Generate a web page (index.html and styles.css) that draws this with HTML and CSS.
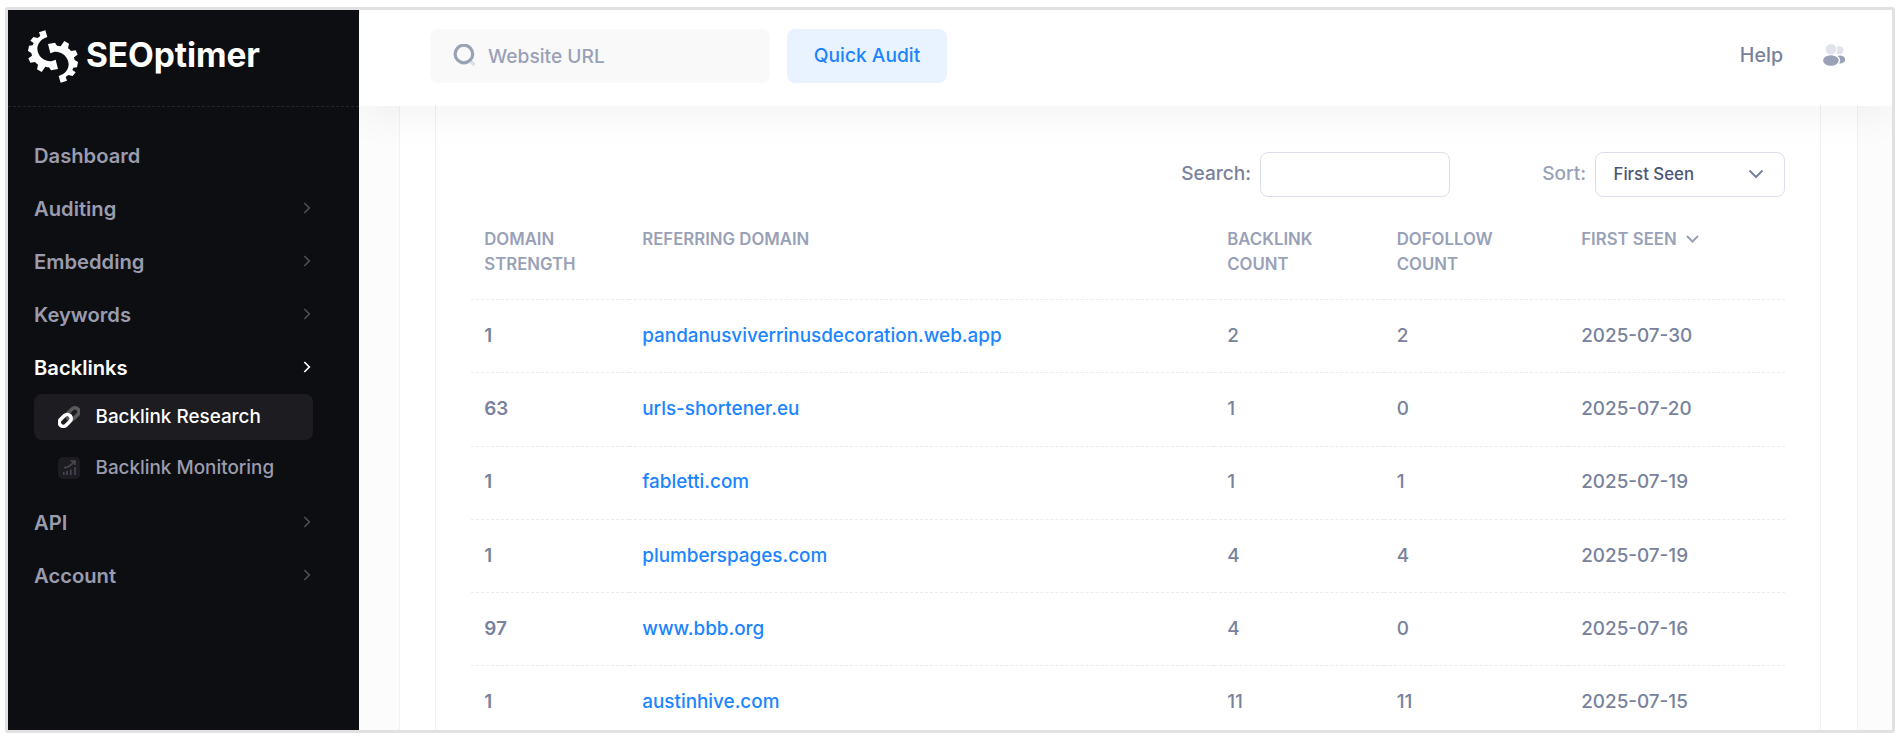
FILE: index.html
```
<!DOCTYPE html>
<html lang="en">
<head>
<meta charset="utf-8">
<title>SEOptimer - Backlink Research</title>
<link rel="stylesheet" href="styles.css">
</head>
<body>
<div class="frame">
  <aside class="sidebar">
    <div class="brand">
      <svg class="brand-mark" viewBox="24 30 150 159">
        <defs>
          <path id="gear" d="M57 37 L76 31 L82 51 C62 57 52 72 52 87 C53 108 72 125 94 124 L107 119 L114 147 L93 151 L87 142 Q82 142 76 140 L65 156 L51 148 L54 134 Q48 130 45 126 L31 128 L25 115 L36 107 L34 99 L24 93 L27 77 L38 76 L41 69 L31 62 L40 51 L53 54 L61 48 Z"/>
        </defs>
        <use href="#gear"/>
        <use href="#gear" transform="rotate(180 99 109.5)"/>
      </svg>
      <span class="brand-name">SEOptimer</span>
    </div>
    <nav class="menu">
      <a class="menu-item">Dashboard</a>
      <a class="menu-item">Auditing<svg class="chev" viewBox="0 0 8 12"><path d="M1.3 1 6.3 6l-5 5"/></svg></a>
      <a class="menu-item">Embedding<svg class="chev" viewBox="0 0 8 12"><path d="M1.3 1 6.3 6l-5 5"/></svg></a>
      <a class="menu-item">Keywords<svg class="chev" viewBox="0 0 8 12"><path d="M1.3 1 6.3 6l-5 5"/></svg></a>
      <a class="menu-item active">Backlinks<svg class="chev" viewBox="0 0 8 12"><path d="M1.3 1 6.3 6l-5 5"/></svg></a>
      <div class="submenu">
        <a class="sub-item active">
          <svg class="sub-icon" viewBox="0 0 22 22" fill="none" stroke-width="3.6">
            <rect x="8.2" y="3.700" width="13.500" height="8" rx="4" transform="rotate(-45 15 7.700)" stroke="#5b5b5e"/>
            <rect x="0.500" y="10.400" width="13.500" height="8" rx="4" transform="rotate(-45 7.250 14.400)" stroke="#fff"/>
          </svg>Backlink Research</a>
        <a class="sub-item">
          <svg class="sub-icon" viewBox="0 0 22 22" fill="none" stroke="#4a4a55" stroke-width="1.5">
            <rect width="22" height="22" rx="5" fill="#1c1c21" stroke="none"/>
            <path d="M5.8 18v-3M9 18v-4M12.800 18v-5.500M17 18V10M6 10.800C10.500 10.500 13.500 8 16.500 4.200M12.500 4h4.500v4"/>
          </svg>Backlink Monitoring</a>
      </div>
      <a class="menu-item">API<svg class="chev" viewBox="0 0 8 12"><path d="M1.3 1 6.3 6l-5 5"/></svg></a>
      <a class="menu-item">Account<svg class="chev" viewBox="0 0 8 12"><path d="M1.3 1 6.3 6l-5 5"/></svg></a>
    </nav>
  </aside>
  <div class="main">
    <header class="topbar">
      <div class="url-box">
        <svg class="search-icon" viewBox="0 0 24 24"><path d="M16.500 16.500l5 4.500" stroke="#dcdfe8" stroke-width="3.200"/><circle cx="10.900" cy="10" r="8.800" stroke="#99a1b7" stroke-width="3.200"/></svg>
        <span>Website URL</span>
      </div>
      <button class="audit-btn">Quick Audit</button>
      <a class="help">Help</a>
      <svg class="users-icon" viewBox="0 0 22 22">
        <circle cx="16.300" cy="6.200" r="4" fill="#e0e3ea"/>
        <ellipse cx="17" cy="15.500" rx="5.200" ry="4" fill="#99a1b7"/>
        <ellipse cx="8.300" cy="16.500" rx="8.900" ry="6.200" fill="#fff"/>
        <circle cx="8" cy="5.300" r="6.200" fill="#fff"/>
        <circle cx="8" cy="5.300" r="5.300" fill="#e0e3ea"/>
        <ellipse cx="7.900" cy="16.500" rx="7.800" ry="5.200" fill="#99a1b7"/>
      </svg>
    </header>
    <div class="content">
      <div class="card"><div class="panel">
        <div class="filters">
          <label class="search-label">Search:</label>
          <input class="search-input" type="text">
          <label class="sort-label">Sort:</label>
          <div class="select">First Seen<svg class="caret" viewBox="0 0 16 10"><path d="M1.500 1.500 8 8l6.500-6.500"/></svg></div>
        </div>
        <div class="table">
          <div class="row head">
            <div>DOMAIN STRENGTH</div><div>REFERRING DOMAIN</div><div>BACKLINK COUNT</div><div>DOFOLLOW COUNT</div><div>FIRST SEEN<svg class="sort-caret" viewBox="0 0 13 8"><path d="M1 1l5.500 5.500L12 1"/></svg></div>
          </div>
          <div class="row"><div class="ds">1</div><div class="link">pandanusviverrinusdecoration.web.app</div><div>2</div><div>2</div><div>2025-07-30</div></div>
          <div class="row"><div class="ds">63</div><div class="link">urls-shortener.eu</div><div>1</div><div>0</div><div>2025-07-20</div></div>
          <div class="row"><div class="ds">1</div><div class="link">fabletti.com</div><div>1</div><div>1</div><div>2025-07-19</div></div>
          <div class="row"><div class="ds">1</div><div class="link">plumberspages.com</div><div>4</div><div>4</div><div>2025-07-19</div></div>
          <div class="row"><div class="ds">97</div><div class="link">www.bbb.org</div><div>4</div><div>0</div><div>2025-07-16</div></div>
          <div class="row"><div class="ds">1</div><div class="link">austinhive.com</div><div>11</div><div>11</div><div>2025-07-15</div></div>
        </div>
      </div></div>
    </div>
  </div>
</div>
</body>
</html>
```
FILE: styles.css
```
* { box-sizing: border-box; }
html, body { height: 100%; }
body {
  margin: 0;
  padding: 7px 5px;
  background: #fff;
  font-family: Inter, "Liberation Sans", sans-serif;
  font-weight: 500;
  font-size: 18.870px;
  color: #78829d;
  overflow: hidden;
}
.frame {
  display: flex;
  height: 726px;
  border: 3px solid #e1e1e1;
  border-radius: 3px;
  overflow: hidden;
}

/* Sidebar */
.sidebar {
  flex: none;
  width: 351px;
  background: #0d0e12;
  color: #9a9cae;
}
.brand {
  display: flex;
  align-items: center;
  height: 97px;
  padding: 0 0 4px 20px;
  border-bottom: 1px dashed #25262b;
}
.brand-mark { width: 50px; height: 53px; fill: #fff; }
.brand-name {
  margin: -2px 0 0 8px;
  color: #fff;
  font-size: 33.5px;
  font-weight: 700;
  letter-spacing: -.1px;
}
.menu { padding: 21.500px 46px 0 26px; }
.menu-item {
  display: flex;
  align-items: center;
  justify-content: space-between;
  height: 53px;
  font-size: 20.200px;
  font-weight: 600;
}
.chev {
  width: 8px;
  height: 12px;
  margin-right: 2px;
  fill: none;
  stroke: #4c4e58;
  stroke-width: 1.700;
}
.menu-item.active { color: #fff; }
.menu-item.active .chev { stroke: #fff; }
.submenu { display: grid; gap: 5px; padding-bottom: 5px; }
.sub-item {
  display: flex;
  align-items: center;
  gap: 15.500px;
  height: 46px;
  padding-left: 24px;
  border-radius: 8px;
}
.sub-item.active { background: #1c1c21; color: #fff; }
.sub-icon { width: 22px; height: 22px; }

/* Top bar */
.main {
  flex: 1;
  display: flex;
  flex-direction: column;
  min-width: 0;
  overflow: hidden;
  background: #fcfcfc;
}
.topbar {
  position: relative;
  z-index: 1;
  flex: none;
  display: flex;
  align-items: center;
  height: 96px;
  padding: 0 47.500px 4px 71px;
  background: #fff;
  box-shadow: 0 10px 40px rgba(0, 0, 0, .05);
}
.url-box {
  display: flex;
  align-items: center;
  gap: 11px;
  width: 340px;
  height: 54px;
  padding-left: 23px;
  border-radius: 8px;
  background: #f9f9f9;
  color: #99a1b7;
  font-size: 19.200px;
}
.search-icon { width: 24px; height: 24px; fill: none; }
.audit-btn {
  width: 160px;
  height: 54px;
  margin-left: 17px;
  padding: 0 0 2px;
  border: 0;
  border-radius: 8px;
  background: #e9f3ff;
  color: #1b84ff;
  font: 500 19.200px Inter, sans-serif;
}
.help { margin: -2px 39.500px 0 auto; font-size: 19.600px; }
.users-icon { width: 22px; height: 22px; margin-top: -2px; }

/* Content */
.content { flex: 1; display: flex; min-height: 0; padding: 0 34px 0 40px; }
.card {
  flex: 1;
  padding: 0 36px 0 35px;
  border: solid #f1f1f4;
  border-width: 0 1px;
  background: #fff;
}
.panel {
  height: 100%;
  padding: 46px 35px 0;
  border: solid #f1f1f4;
  border-width: 0 1px;
  overflow: hidden;
}
.filters { display: flex; align-items: center; justify-content: flex-end; height: 45px; }
.search-label, .sort-label { margin: -3px 9px 0 0; font-size: 19.100px; }
.sort-label { color: #99a1b7; }
.search-input {
  width: 190px;
  height: 45px;
  margin: 0 92px 0 0;
  border: 1px solid #dbdfe9;
  border-radius: 8px;
  background: #fff;
}
.select {
  display: flex;
  align-items: center;
  justify-content: space-between;
  width: 190px;
  height: 45px;
  padding: 0 20px 1px 17.500px;
  border: 1px solid #dbdfe9;
  border-radius: 8px;
  color: #4b5675;
  font-size: 16.800px;
}
.caret { width: 16px; height: 10px; fill: none; stroke: #78829d; stroke-width: 2; }

/* Table */
.table { margin-top: 29.750px; }
.row {
  display: grid;
  grid-template-columns: 158px 585px 169.500px 184.500px 1fr;
  height: 73.250px;
}
.row > div {
  display: flex;
  align-items: center;
  padding: 0 0 1.500px 13.250px;
  border-bottom: 1px dashed #ececef;
}
.row.head {
  color: #99a1b7;
  font-size: 16.750px;
  font-weight: 600;
  line-height: 25px;
}
.row.head > div { align-items: flex-start; padding-right: 40px; }
.row .ds { font-weight: 600; }
.row .link { color: #1b84ff; }
.sort-caret {
  width: 13px;
  height: 8px;
  margin: 8px 0 0 9px;
  fill: none;
  stroke: #99a1b7;
  stroke-width: 2;
}
```
